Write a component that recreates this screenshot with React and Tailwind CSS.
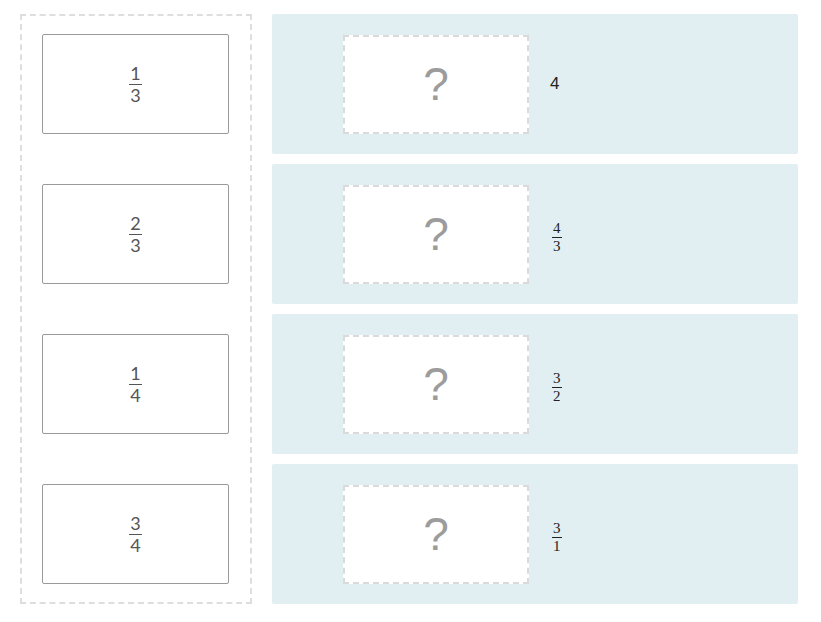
import React from "react";

function Frac({ n, d, serif }) {
  return (
    <span
      className={
        serif
          ? "inline-flex flex-col items-center text-[15px] leading-[13px] text-[#222] font-['Liberation_Serif',serif]"
          : "inline-flex flex-col items-center text-[18px] leading-[15px] text-[#555] font-['Lato',sans-serif]"
      }
    >
      <span className="px-[1px]">{n}</span>
      <span className={serif ? "h-px w-full bg-[#222] my-[2px]" : "h-px w-full bg-[#555] my-[3px]"} />
      <span className="px-[1px]">{d}</span>
    </span>
  );
}

const choices = [
  ["1", "3"],
  ["2", "3"],
  ["1", "4"],
  ["3", "4"],
];

const targets = [null, ["4", "3"], ["3", "2"], ["3", "1"]];

export default function App() {
  return (
    <div className="w-[821px] h-[622px] bg-white flex gap-5 pl-5 pt-[14px] font-['Liberation_Sans',sans-serif]">
      <div className="w-[232px] h-[590px] border-2 border-dashed border-[#dedede] px-5 py-[18px] flex flex-col gap-[50px]">
        {choices.map(([n, d], i) => (
          <div
            key={i}
            className="h-[100px] w-[187px] border border-[#9a9a9a] rounded-[2px] bg-white flex items-center justify-center"
          >
            <Frac n={n} d={d} />
          </div>
        ))}
      </div>
      <div className="w-[526px] flex flex-col gap-[10px]">
        {targets.map((t, i) => (
          <div
            key={i}
            className="h-[140px] bg-[#e1eef2] rounded-[2px] flex items-center pl-[71px] gap-[21px]"
          >
            <div className="w-[186px] h-[99px] bg-white border-2 border-dashed border-[#dadada] flex items-center justify-center text-[46px] text-[#9c9c9c] leading-none">
              ?
            </div>
            {t ? (
              <span className="pl-[2px]">
                <Frac n={t[0]} d={t[1]} serif />
              </span>
            ) : (
              <span className="text-[17px] text-[#222]">4</span>
            )}
          </div>
        ))}
      </div>
    </div>
  );
}
